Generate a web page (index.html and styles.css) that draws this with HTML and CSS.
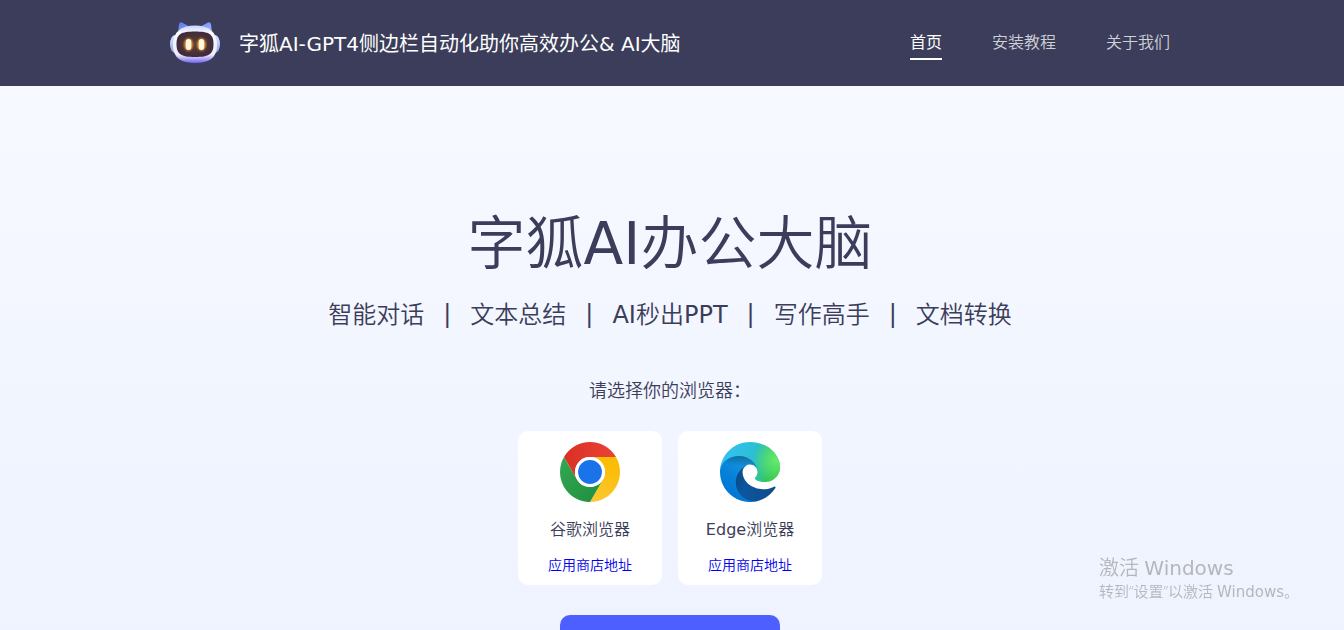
FILE: index.html
```html
<!DOCTYPE html>
<html lang="zh-CN">
<head>
<meta charset="utf-8">
<meta name="viewport" content="width=device-width, initial-scale=1">
<title>字狐AI办公大脑</title>
<link rel="stylesheet" href="styles.css">
</head>
<body>
<header class="header">
  <div class="header-inner">
    <svg class="logo" viewBox="0 0 50 44" aria-hidden="true">
      <defs>
        <linearGradient id="shell" x1="0" y1="0" x2="0" y2="1">
          <stop offset="0" stop-color="#c9d2ff"/><stop offset=".2" stop-color="#fbfbff"/><stop offset=".78" stop-color="#eeeafd"/><stop offset="1" stop-color="#6f62f0"/>
        </linearGradient>
        <linearGradient id="ear" x1="0" y1="0" x2="1" y2="1">
          <stop offset="0" stop-color="#5878ea"/><stop offset="1" stop-color="#a8c0ff"/>
        </linearGradient>
        <linearGradient id="side" x1="0" y1="0" x2="0" y2="1">
          <stop offset="0" stop-color="#dce8ff"/><stop offset="1" stop-color="#8fa5f6"/>
        </linearGradient>
        <radialGradient id="face"><stop offset="0" stop-color="#63402f"/><stop offset="1" stop-color="#3f2b3a"/></radialGradient>
        <radialGradient id="glow"><stop offset="0" stop-color="#ffb33c"/><stop offset=".5" stop-color="#ffa52c" stop-opacity=".8"/><stop offset="1" stop-color="#ff9a20" stop-opacity="0"/></radialGradient>
      </defs>
      <ellipse cx="5" cy="23" rx="5" ry="9" fill="url(#side)"/>
      <ellipse cx="45" cy="23" rx="5" ry="9" fill="url(#side)"/>
      <path d="M8 13 9 3Q10 0 13 2L22 7ZM42 13 41 3Q40 0 37 2L28 7Z" fill="url(#ear)"/>
      <path d="M25 4.500C39 4.500 47 11 47 24S39 42 25 42 3 37 3 24 11 4.500 25 4.500Z" fill="url(#shell)"/>
      <path d="M25 10.500C39 10.500 43.500 13 43.500 23S39 36 25 36 6.500 33 6.500 23 11 10.500 25 10.500Z" fill="url(#face)"/>
      <ellipse cx="18.500" cy="23.500" rx="6" ry="8" fill="url(#glow)"/>
      <ellipse cx="31.500" cy="23.500" rx="6" ry="8" fill="url(#glow)"/>
      <rect x="15.800" y="18" width="5.500" height="11" rx="2.700" fill="#fff6dc"/>
      <rect x="28.700" y="18" width="5.500" height="11" rx="2.700" fill="#fff6dc"/>
    </svg>
    <div class="brand">字狐AI-GPT4侧边栏自动化助你高效办公&amp; AI大脑</div>
    <nav class="nav">
      <a class="nav-link active" href="#">首页</a>
      <a class="nav-link" href="#">安装教程</a>
      <a class="nav-link" href="#">关于我们</a>
    </nav>
  </div>
</header>
<main class="hero">
  <h1 class="title">字狐<span class="latin">AI</span>办公大脑</h1>
  <div class="features">
    <span>智能对话</span><span class="bar">|</span><span>文本总结</span><span class="bar">|</span><span><span class="latin">AI</span>秒出<span class="latin">PPT</span></span><span class="bar">|</span><span>写作高手</span><span class="bar">|</span><span>文档转换</span>
  </div>
  <p class="prompt">请选择你的浏览器：</p>
  <div class="cards">
    <section class="card">
      <svg class="browser" viewBox="0 0 60 60" aria-hidden="true">
        <defs>
          <linearGradient id="cr" x1="0" x2="1"><stop offset="0" stop-color="#d93025"/><stop offset="1" stop-color="#ea4335"/></linearGradient>
          <linearGradient id="cy" x1="0" y1="1" x2=".4" y2="0"><stop offset="0" stop-color="#fcc934"/><stop offset="1" stop-color="#fbbc04"/></linearGradient>
          <linearGradient id="cg" x1="1" y1="1" x2="0" y2="0"><stop offset="0" stop-color="#1e8e3e"/><stop offset="1" stop-color="#34a853"/></linearGradient>
        </defs>
        <path d="M30 15H55.980A30 30 0 0 1 30 60L43 37.500A15 15 0 0 0 30 15Z" fill="url(#cy)"/>
        <path d="M43 37.500 30 60A30 30 0 0 1 4.020 15L17 37.500A15 15 0 0 0 43 37.500Z" fill="url(#cg)"/>
        <path d="M17 37.500 4.020 15A30 30 0 0 1 55.980 15H30A15 15 0 0 0 17 37.500Z" fill="url(#cr)"/>
        <circle cx="30" cy="30" r="15" fill="#fff"/>
        <circle cx="30" cy="30" r="11.900" fill="#1a73e8"/>
      </svg>
      <h2 class="browser-name">谷歌浏览器</h2>
      <a class="store" href="#">应用商店地址</a>
    </section>
    <section class="card">
      <svg class="browser" viewBox="0 0 256 256" aria-hidden="true">
        <defs>
          <linearGradient id="e1" gradientUnits="userSpaceOnUse" x1="58" y1="177" x2="237" y2="177"><stop offset="0" stop-color="#0c59a4"/><stop offset="1" stop-color="#114a8b"/></linearGradient>
          <linearGradient id="e2" gradientUnits="userSpaceOnUse" x1="150" y1="95" x2="45" y2="220"><stop offset="0" stop-color="#1b9de2"/><stop offset=".16" stop-color="#1595df"/><stop offset=".67" stop-color="#0680d7"/><stop offset="1" stop-color="#0078d4"/></linearGradient>
          <linearGradient id="e2s" gradientUnits="userSpaceOnUse" x1="90" y1="58" x2="82" y2="105"><stop offset="0" stop-opacity=".3"/><stop offset="1" stop-opacity="0"/></linearGradient>
          <linearGradient id="e1s" gradientUnits="userSpaceOnUse" x1="66" y1="165" x2="110" y2="180"><stop offset="0" stop-opacity=".15"/><stop offset="1" stop-opacity="0"/></linearGradient>
          <linearGradient id="e3" gradientUnits="userSpaceOnUse" x1="10" y1="70" x2="220" y2="130"><stop offset="0" stop-color="#35c1f1"/><stop offset=".55" stop-color="#2cbfd5"/><stop offset="1" stop-color="#36c752"/></linearGradient>
          <radialGradient id="e3g" gradientUnits="userSpaceOnUse" cx="240" cy="77" r="96"><stop offset="0" stop-color="#66eb6e"/><stop offset="1" stop-color="#66eb6e" stop-opacity="0"/></radialGradient>
          <path id="wave" d="M231 190.500c-3.400 1.800-6.900 3.400-10.500 4.700-11.500 4.300-23.600 6.500-35.900 6.500-47.300 0-88.500-32.500-88.500-74.300.1-11.400 6.400-21.900 16.400-27.300-42.800 1.800-53.800 46.400-53.800 72.500 0 73.900 68.100 81.400 82.800 81.400 7.900 0 19.800-2.300 27-4.600l1.300-.4c27.600-9.500 51-28.100 66.600-52.800 1.200-1.900.6-4.300-1.200-5.500-1.300-.7-2.900-.9-4.200-.2z"/>
          <path id="body" d="M105.700 241.500c-8.900-5.500-16.600-12.800-22.700-21.300-26.300-36-18.400-86.500 17.600-112.800 3.800-2.700 7.700-5.200 11.900-7.200 3.100-1.500 8.400-4.100 15.500-4 10.100.1 19.600 4.900 25.700 13 4 5.400 6.300 11.900 6.400 18.700 0-.2 24.500-79.600-80-79.600-43.900 0-80 41.700-80 78.200-.2 19.300 4 38.500 12.100 56 27.600 58.800 94.800 87.600 156.400 67.100-21.100 6.600-44.100 3.700-62.900-8.100z"/>
          <path id="crest" d="M152.300 148.900c-.8 1-3.300 2.500-3.300 5.700 0 2.600 1.700 5.100 4.700 7.200 14.400 10 41.500 8.700 41.600 8.700 10.700 0 21.100-2.900 30.300-8.300 18.800-11 30.400-31.100 30.400-52.900.3-22.400-8-37.300-11.300-43.900C223.500 23.900 177.700 0 128 0 58 0 1 56.200 0 126.200c.5-36.500 36.800-66 80-66 3.500 0 23.500.3 42 10.100 16.300 8.600 24.900 18.900 30.800 29.200 6.200 10.700 7.300 24.100 7.300 29.500 0 5.300-2.700 13.200-7.800 19.900z"/>
        </defs>
        <use href="#wave" fill="url(#e1)"/><use href="#wave" fill="url(#e1s)"/>
        <use href="#body" fill="url(#e2)"/><use href="#body" fill="url(#e2s)"/>
        <use href="#crest" fill="url(#e3)"/><use href="#crest" fill="url(#e3g)"/>
      </svg>
      <h2 class="browser-name"><span class="latin">Edge</span>浏览器</h2>
      <a class="store" href="#">应用商店地址</a>
    </section>
  </div>
  <button class="cta" type="button"></button>
</main>
<aside class="watermark">
  <div class="watermark-title">激活 <span class="latin">Windows</span></div>
  <div class="watermark-text">转到“设置”以激活 <span class="latin">Windows</span>。</div>
</aside>
</body>
</html>
```

FILE: styles.css
```css
* {
  box-sizing: border-box;
}

body {
  margin: 0;
  height: 100vh;
  overflow: hidden;
  font-family: "Open Sans", "Noto Sans CJK SC", sans-serif;
  font-weight: 350;
  color: #3b3d5a;
  background: linear-gradient(#f8faff, #eef3ff);
}

.latin,
.bar {
  font-family: "DejaVu Sans", sans-serif;
  font-weight: 400;
}

.latin {
  line-height: 1;
}

.header {
  padding-right: 4px;
  background: #3b3d5a;
}

.header-inner {
  display: flex;
  align-items: center;
  max-width: 1000px;
  height: 86px;
  margin: 0 auto;
}

.logo {
  width: 50px;
  height: 44px;
  margin-right: 19px;
}

.brand {
  padding-top: 2px;
  font-family: "DejaVu Sans", "Noto Sans CJK SC", sans-serif;
  font-size: 20px;
  font-weight: 400;
  line-height: 30px;
  color: #fff;
}

.nav {
  display: flex;
  gap: 50px;
  margin-left: auto;
}

.nav-link {
  padding: 4px 0;
  border-bottom: 2px solid transparent;
  font-size: 16px;
  line-height: 24px;
  color: #d0d0d8;
  text-decoration: none;
}

.nav-link.active {
  border-bottom-color: #fff;
  font-weight: 400;
  color: #fff;
}

.hero {
  display: flex;
  flex-direction: column;
  align-items: center;
  padding: 114px 4px 0 0;
}

.title {
  margin: 0;
  font-size: 58px;
  font-weight: 350;
  line-height: 84px;
}

.features {
  display: flex;
  gap: 19px;
  margin-top: 12px;
  font-size: 24px;
  line-height: 36px;
}

.prompt {
  margin: 44px 0 0;
  font-size: 18px;
  line-height: 28px;
}

.cards {
  display: flex;
  gap: 16px;
  margin-top: 27px;
}

.card {
  display: flex;
  flex-direction: column;
  align-items: center;
  width: 144px;
  padding: 11px 0 10px;
  border-radius: 10px;
  background: #fff;
}

.browser {
  width: 60px;
  height: 60px;
}

.browser-name {
  margin: 15px 0 14px;
  font-size: 16px;
  font-weight: 350;
  line-height: 24px;
}

.store {
  font-size: 14px;
  line-height: 20px;
  color: #0000ee;
  text-decoration: none;
}

.cta {
  width: 220px;
  height: 60px;
  margin-top: 30px;
  border: 0;
  border-radius: 10px;
  background: #4e5fff;
}

.watermark {
  position: fixed;
  right: 45px;
  bottom: 29px;
  color: #b5b7bb;
}

.watermark-title {
  font-size: 20px;
  line-height: 26px;
}

.watermark-text {
  font-size: 15px;
  line-height: 20px;
}
```
